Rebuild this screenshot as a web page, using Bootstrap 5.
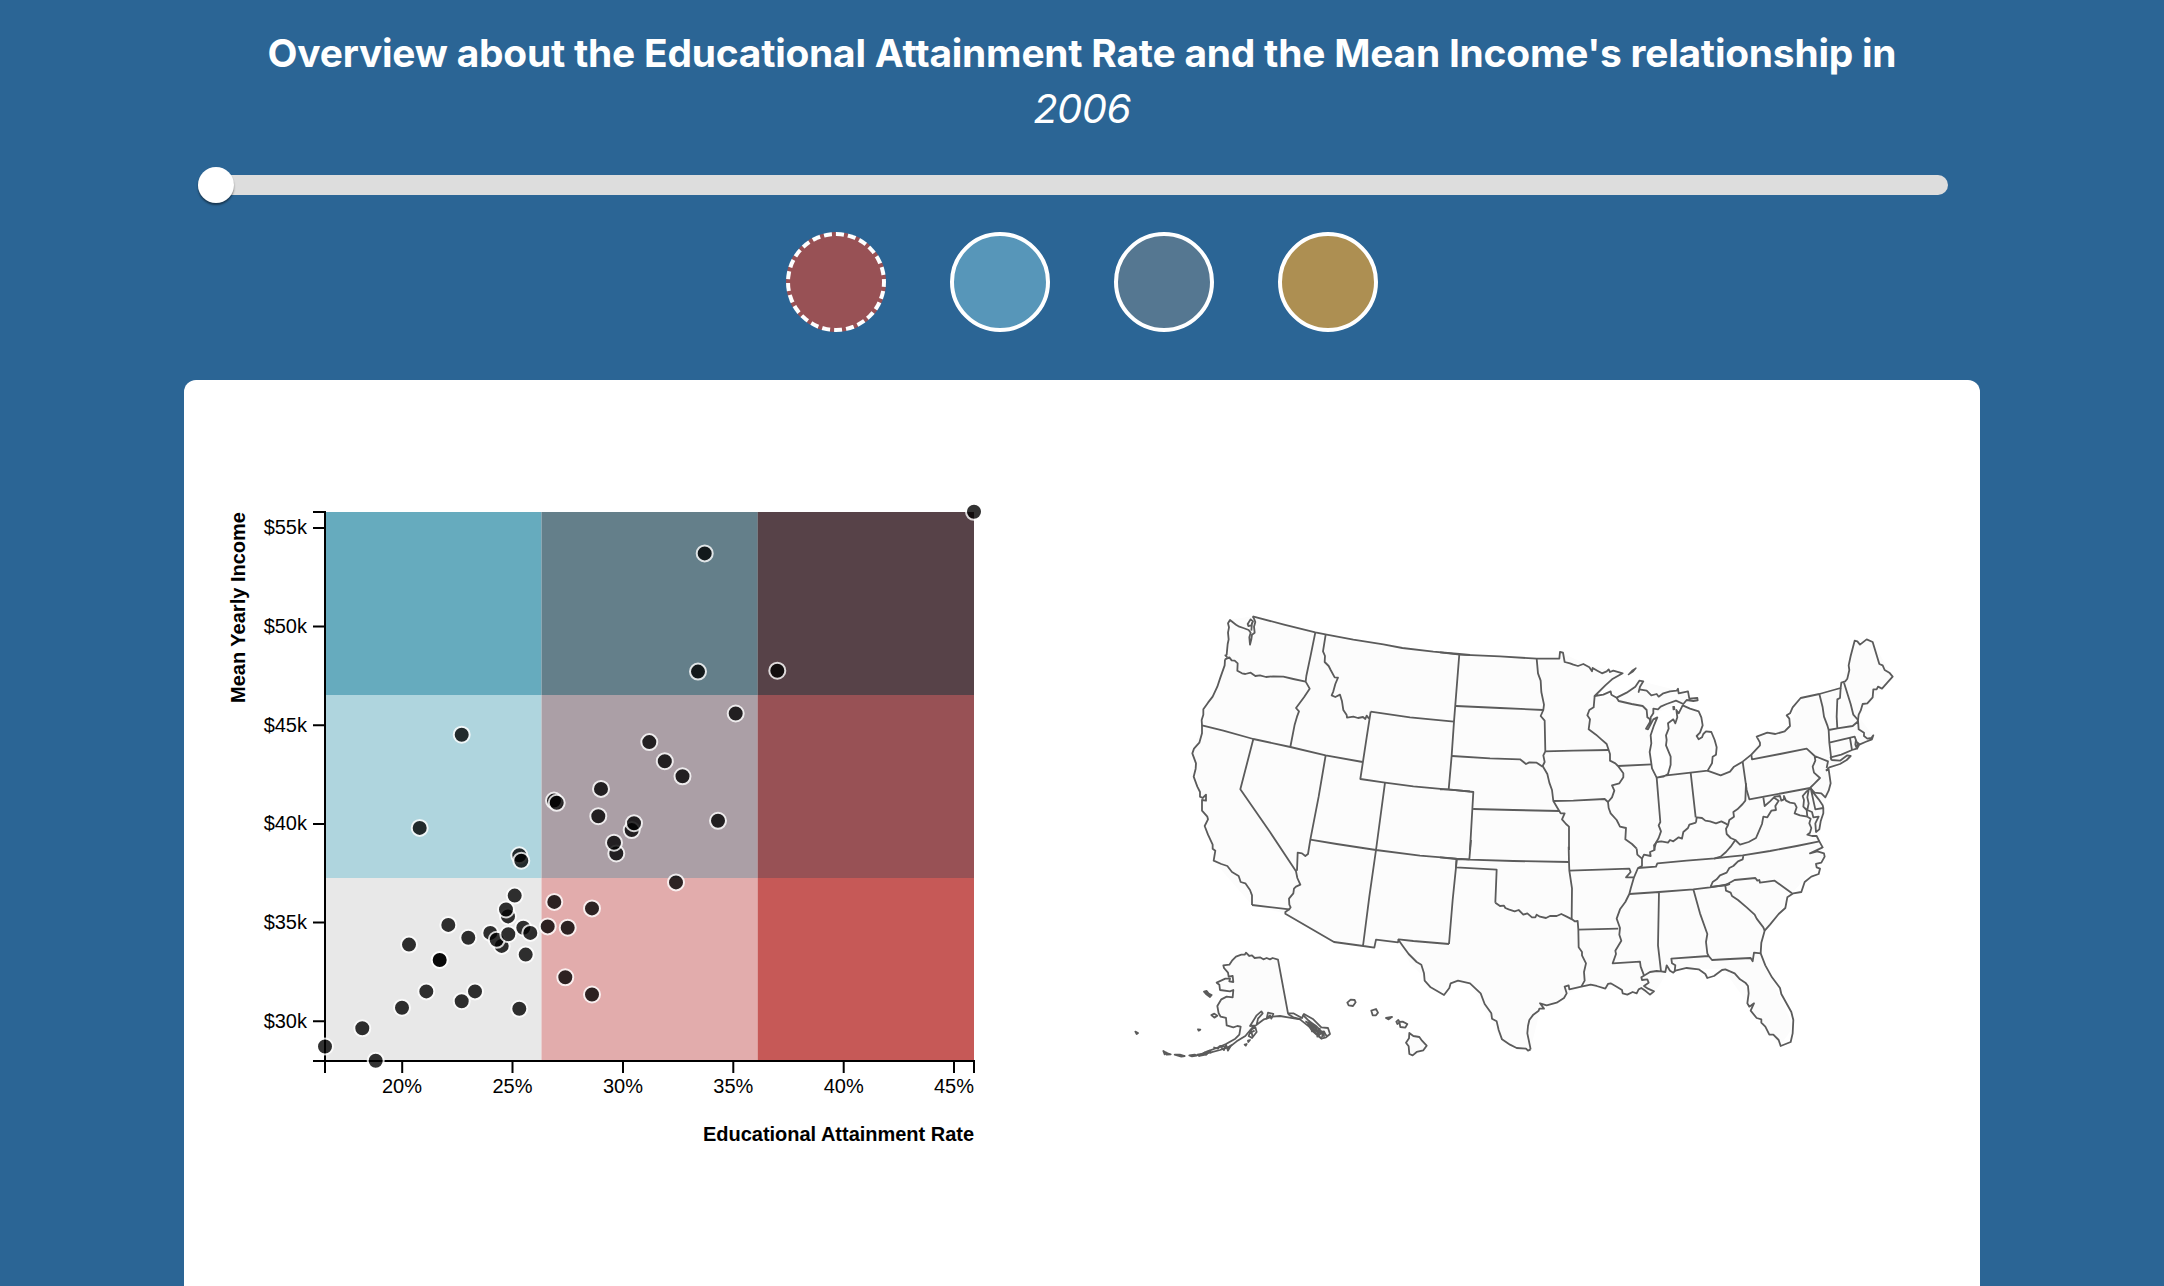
<!DOCTYPE html>
<html lang="en">
<head>
<meta charset="utf-8">
<meta name="viewport" content="width=device-width, initial-scale=1">
<title>Educational Attainment and Mean Income</title>
<link href="https://cdn.jsdelivr.net/npm/bootstrap@5.3.0/dist/css/bootstrap.min.css" rel="stylesheet">
<script src="https://cdn.jsdelivr.net/npm/bootstrap@5.3.0/dist/js/bootstrap.bundle.min.js"></script>
<style>
body{background:#2b6595;font-family:Inter,"Liberation Sans",sans-serif;height:1286px}
.page-wrap{width:1796px}
.headline{font-size:38.9px;line-height:56px;padding-top:25px;height:139px}
.headline strong{font-weight:700;letter-spacing:-.215px;white-space:nowrap}
.headline em{font-weight:400;letter-spacing:-.5px;font-size:40px}
.year-slider{-webkit-appearance:none;appearance:none;display:block;width:1750px;height:20px;margin:36px 0 0 14px;border-radius:10px;background:#ddd;outline:0}
.year-slider::-webkit-slider-thumb{-webkit-appearance:none;width:36px;height:36px;border-radius:50%;background:#fff;box-shadow:0 2px 2px rgba(0,0,0,.45);border:0}
.palettes{gap:64px;margin-top:37px}
.swatch{width:100px;height:100px;border:4px solid #fff;padding:0}
.swatch.active{border-style:dashed}
.sw-red{background:#985155}.sw-blue{background:#5796b9}.sw-slate{background:#557791}.sw-gold{background:#ad8f52}
.panel{margin-top:48px;height:906px;border-radius:12px 12px 0 0}
.panel svg{width:898px;height:906px}
.axis{fill:none;stroke:#000;stroke-width:2}
.chart-text{font:20px "Liberation Sans",sans-serif}
.chart-text .ttl{font-weight:700}
.dots circle{r:8px;fill:#000;stroke:#fff;stroke-width:2;opacity:.8}
.borders{fill:none;stroke:#5b5b5b;stroke-width:5.4;stroke-linejoin:round}
.land{fill:#fcfcfc}
</style>
</head>
<body class="overflow-hidden">
<main class="page-wrap mx-auto">
  <h1 class="headline text-white text-center mb-0"><strong>Overview about the Educational Attainment Rate and the Mean Income's relationship in</strong><br><em>2006</em></h1>
  <input class="year-slider" type="range" min="2006" max="2017" value="2006" aria-label="Year">
  <div class="palettes d-flex justify-content-center">
    <button class="swatch sw-red active rounded-circle" aria-label="Red palette"></button>
    <button class="swatch sw-blue rounded-circle" aria-label="Blue palette"></button>
    <button class="swatch sw-slate rounded-circle" aria-label="Slate palette"></button>
    <button class="swatch sw-gold rounded-circle" aria-label="Gold palette"></button>
  </div>
  <section class="panel bg-white d-flex">
    <svg viewBox="184 380 898 906">
      <g>
        <path fill="#66abbe" d="M325 512h216.5v183H325z"/><path fill="#647f8a" d="M541.5 512h216.3v183H541.5z"/><path fill="#574248" d="M757.7 512H974v183H757.7z"/>
        <path fill="#afd5de" d="M325 695h216.5v183H325z"/><path fill="#ab9fa6" d="M541.5 695h216.3v183H541.5z"/><path fill="#985155" d="M757.7 695H974v183H757.7z"/>
        <path fill="#e8e8e8" d="M325 878h216.5v183H325z"/><path fill="#e2acac" d="M541.5 878h216.3v183H541.5z"/><path fill="#c65957" d="M757.7 878H974v183H757.7z"/>
      </g>
      <path class="axis" d="M313 512H325V1061H313M313 528H325M313 626.5H325M313 725.3H325M313 824H325M313 922.5H325M313 1021.3H325"/>
      <path class="axis" d="M325 1073V1061H974V1073M402.2 1061V1073M512.5 1061V1073M623 1061V1073M733.3 1061V1073M843.7 1061V1073M954 1061V1073"/>
      <g class="chart-text" text-anchor="end">
        <text x="307" y="534">$55k</text><text x="307" y="633">$50k</text><text x="307" y="732">$45k</text><text x="307" y="830">$40k</text><text x="307" y="929">$35k</text><text x="307" y="1028">$30k</text>
        <text class="ttl" x="974" y="1141" textLength="271">Educational Attainment Rate</text>
        <text class="ttl" transform="translate(244.5 512) rotate(-90)" textLength="191">Mean Yearly Income</text>
      </g>
      <g class="chart-text" text-anchor="middle">
        <text x="402" y="1093">20%</text><text x="512.5" y="1093">25%</text><text x="623" y="1093">30%</text><text x="733.3" y="1093">35%</text><text x="843.7" y="1093">40%</text><text x="954" y="1093">45%</text>
      </g>
      <g class="dots" id="dots"></g>
    </svg>
    <svg viewBox="1082 380 898 906">
      <g transform="translate(1120 600) scale(.33333)">
        <path class="land" d="M398 49L586 97 790 133 1020 164 1318 176 1330 160 1400 194 1508 220 1424 288 1490 294 1560 242 1680 274 1732 300 1690 310 1600 340 1590 420 1596 500 1610 533 1650 522 1640 400 1690 316 1740 340 1740 410 1785 410 1763 512 1830 515 1896 464 1920 410 2010 380 2042 294 2162 264 2204 122 2258 126 2318 230 2216 350 2260 408 2120 510 2132 560 2110 620 2098 724 2112 770 2016 880 1934 992 1922 1060 2020 1280 1980 1338 1890 1220 1810 1108 1650 1104 1600 1184 1510 1170 1384 1160 1260 1230 1232 1348 1150 1330 1050 1150 1000 1150 960 1180 870 1090 834 1022 763 1043 642 1026 496 941 396 915 280 782 217 460 246 376 320 170 325 60Z"/>
        <!-- Pacific, Mountain and Southwest states -->
        <g class="borders" transform="translate(180 0)">
          <path d="M218 49L312 74 406 97 440 104 520 119 610 133 667 144 760 155 838 162 870 165"/>
          <path d="M218 49L222 56 226 66 222 80 224 98 216 104 214 118 210 134 208 112 212 98 206 90 190 84 178 80 168 74 150 60 144 70 147 82 144 98 146 118 143 132 140 164 136 166 142 172M203 72l9-14 7 6-5 12-9 2zM216 68l-2 24"/>
          <path d="M135 178L148 172 155 181 164 182 173 190 172 212 186 220 196 222 212 218 226 228 240 226 258 231 280 229 310 230 340 237 377 245"/>
          <path d="M406 97L392 166 379 228 377 245 389 266 372 292 348 324 357 334 351 350 344 374 331 441"/>
          <path d="M135 178L134 196 120 236 112 260 98 290 84 308 70 328 70 344 65 360 66 376 130 392 220 417 331 441 437 466 548 486"/>
          <path d="M437 104L429 154 435 168 434 186 446 198 452 210 464 232 474 233 466 252 460 274 455 286 466 291 480 284 486 304 490 330 500 345 501 353 520 350 534 354 549 351 556 357 560 347 567 356"/>
          <path d="M572 335L560 412 541 537 615 548 700 559 806 569 870 574M572 335L690 352 822 365M838 162L822 365 815 467 806 569"/>
          <path d="M437 466L416 590 391 719 384 762 376 768 366 760 353 758 351 812M220 417L181 568 270 696 348 814 352 834 361 854 348 860 342 866 340 880 327 896 328 914 332 922 328 928 216 915"/>
          <path d="M328 928L316 936 316 941 462 1026 550 1038 583 1043 588 1019 654 1027 656 1018 700 1023 807 1032M391 719L470 732 588 750 720 767 830 776 868 778M615 548L588 750 568 890 549 1038M830 776L828 802 818 900 807 1032"/>
          <path d="M66 376L66 400 58 428 42 446 37 460 48 490 47 506 41 530 52 560 60 576 60 590 68 594 78 584 78 602 66 600 66 632 82 650 84 658 74 678 84 704 98 734 98 746 106 752 101 782 124 792 142 798 156 816 176 828 182 846 196 850 210 870 216 886 216 915"/>
        </g>
        <!-- Upper Midwest and Great Lakes -->
        <g class="borders" transform="translate(960 90)">
          <path d="M0 67L60 74 180 79 290 86 358 86 360 66 369 68 374 96 390 100 400 104 414 108 430 102 448 112 456 124 458 114 472 122 486 130 500 124 506 118 510 126 520 122 548 130 516 148 496 166 464 198 490 194 512 184 514 194 530 203 560 188 586 170 598 152 610 154 600 170 596 186 598 178 620 182 634 196 650 192 656 200 670 190 690 184 710 182 714 176 716 190 744 184 748 206 772 204 773 211 760 213 740 210 730 222 708 212 680 222 662 230 654 238 640 236 640 250 632 262 632 278"/>
          <path stroke-width="4" fill="#5b5b5b" d="M565 134L576 122 588 114 580 124ZM699 230l4 0 1 8-4 1z"/>
          <path d="M530 203L536 213 575 222 608 228 620 240 622 262 630 268 630 276 618 296 624 298 640 268 652 262 642 286 632 316 634 340 629 366 634 400 636 415 650 443 670 440 684 432 692 404 692 380 678 346 680 330 678 316 686 296 684 280 700 268 706 280 712 262 709 240 716 250 728 226 750 236 776 244 784 262 788 286 780 308 770 318 776 328 786 322 790 312 798 304 814 306 824 330 830 352 828 374 818 380 816 400 803 422 752 428 680 436 650 443"/>
          <path d="M752 428L767 562M534 408L636 403M650 443L661 576 656 586 663 604 656 624 648 638 642 660"/>
          <path d="M464 198L461 232 448 240 442 256 450 268 446 298 468 314 484 328 500 342 506 360 510 372 510 392 526 400 534 408 550 430 550 442 538 460 516 466 523 482 516 502 504 516 506 534 512 550 530 570 540 590 558 594 556 628 576 642 590 656"/>
          <path d="M314 364L400 362 506 360M340 513L400 512 494 507 504 516M290 86L294 130 302 152 304 186 312 224 310 240 302 258 314 272 316 364 310 376 314 396 308 408 322 432 328 458 336 480 340 513 356 540 362 550 374 550 366 568 378 582 387 590 387 660"/>
          <path d="M48 228L180 234 310 240M36 378L150 385 240 388 258 402 268 397 290 398 308 410M100 537L220 540 358 543M0 478L26 478 100 486 90 660"/>
        </g>
        <!-- South Central -->
        <g class="borders" transform="translate(960 660)">
          <path d="M0 112L48 117 88 119 220 123 387 126M386 80L387 126 388 152 396 205 395 298M93 60L88 118M50 117L48 142 170 149 166 248"/>
          <path d="M166 248L180 258 192 257 196 264 206 268 224 274 236 270 250 284 262 280 276 292 286 292 290 284 300 290 318 294 330 288 350 288 364 282 380 290 396 298 404 304 413 303 415 328 416 382 426 396 426 406 438 430 432 456 434 482 424 500M415 329L535 326"/>
          <path d="M388 152L480 149 568 146 572 156 558 172 582 172M590 86L592 104 606 116 606 138 594 144 582 172 572 206 568 222 556 246 540 268 530 296 540 324 538 344 544 362 526 392 528 402 518 430 600 425 602 440 612 466"/>
          <path d="M606 116L612 104 632 108 630 96 644 90 642 76 650 66 664 64 684 68 690 60 700 64 716 52 726 56 730 36 744 24 748 14 768 8"/>
          <path d="M594 144L648 140 652 130 740 122 825 115 870 110M568 222L657 216 760 208 810 202 870 192M657 216L654 376 663 454M760 208L780 280 802 342 798 366 802 400 806 408 694 416 696 430 706 436 704 454M806 408L816 420 870 417"/>
          <path d="M272 688L262 640 264 618 268 600 280 584 296 572 298 566 312 566 300 550 320 556 350 548 372 534 380 520 374 500 386 496 388 508 424 500 452 494 470 498 496 506 504 492 512 490 530 500 546 510 548 520 562 524 578 516 590 520 596 508 604 504 618 514 630 524 642 514 624 506 612 498 626 488 622 478 606 480 604 472 614 466 630 456 650 453 663 454 676 456 680 436 690 452 700 458 706 452 740 444 776 448 796 462 802 474 822 468 846 450 856 448 870 454"/>
          <path d="M-126 358L-110 380-94 402-70 426-56 434-48 460-46 482-28 502 12 525 28 504 32 490 54 482 90 490 122 520 134 552 154 580 156 596 170 604 176 630 186 658 210 674 230 684 258 686 264 692 272 688"/>
        </g>
        <!-- Southeast and mid-Atlantic -->
        <g class="borders" transform="translate(1440 480)">
          <path d="M438 70L436 122 428 132 412 148 400 156 402 170 388 180 384 196 376 190 364 184 348 190 330 184 316 182 306 174 290 172 288 188M384 196L378 206 380 222 392 234 406 240 392 260 378 276 362 290 342 296"/>
          <path d="M406 240L420 254 446 246 468 234 474 220 486 192 490 170 502 172 514 152 528 150 526 138 536 122 520 112M490 112L494 138 510 124 524 110 540 108 544 122 552 118 552 108 558 122 570 128 584 130 590 142 584 160 600 166 622 170"/>
          <path d="M622 170L620 150 610 140 612 120 608 108 620 94 632 84M622 170L632 176 628 190 634 204 630 218 622 224 636 228 650 228 658 244M626 90L622 112 626 130 622 150 636 156 640 172 656 170 646 190 648 216 658 208 662 184 670 160 670 144M632 84L642 130 646 148 670 144 668 136 656 118 640 98 632 84"/>
          <path d="M390 290L428 286 510 273 590 258 658 244 668 262 630 280 652 274 672 280 674 290 664 308 648 312 650 322 660 326 656 342 634 350 614 366 604 396 580 400 562 412 556 444 536 462 510 494 494 512 484 548 482 580"/>
          <path d="M390 372L376 376 330 381M376 376L404 360 466 354 472 362 478 360 480 368 524 362 576 400M430 288L428 298 414 304 400 318 388 324 380 338 360 346 350 358 338 366 332 380M376 376L378 392 392 398 396 408 414 420 440 442 464 464 470 476 490 502 494 512"/>
          <path d="M390 597L452 594 458 604 462 578 482 580 496 616 516 652 540 684 544 702 574 756 580 780 578 820 572 846 542 858 536 840 520 824 508 824 496 800 484 788 484 778 470 774 452 752 462 730 448 740 442 730 446 700 444 678 436 668 420 658 404 640 390 634"/>
        </g>
        <!-- Northeast -->
        <g class="borders" transform="translate(1680 60)">
          <path d="M82 452L122 466 150 455 162 440 188 425 214 404 240 376 240 368 230 350 262 338 286 342 314 334 330 318 328 296 320 286 330 280 338 262 362 234 418 222 482 204 484 188 496 184 502 176 508 150 506 136 512 108 524 62 532 64 540 74 560 58 578 66 598 132 608 136 614 150 628 158 638 170 622 188 606 206 594 200 590 208 580 208 578 232 562 250 548 252 542 272 536 284 534 300"/>
          <path d="M492 188L512 252 520 284 534 300 532 306 518 318 472 325 446 330M482 204L480 234 472 238 470 290 472 325M418 222L428 262 432 290 442 316 446 330 448 368 454 418M448 368L524 350 530 366 540 374M534 300L536 328 552 338 552 348 562 356 574 354 580 346 576 358 556 366 538 374 530 388M510 354L516 390M528 358l-2 16 4 10 4-16M454 420L452 412 484 404 516 390 530 386M454 420L480 422 502 406 512 408 500 420 480 432 448 442 438 452"/>
          <path d="M214 404L216 418 300 402 380 386 404 408 444 424 440 444M404 408L406 422 398 440 402 458 420 474 404 490 390 504 252 530 208 538 200 510 188 425M438 452L446 448 452 490 446 512 436 532 424 520 404 518 390 504"/>
        </g>
        <!-- Alaska and Hawaii -->
        <g class="borders" transform="translate(0 1020)">
          <path fill="#fcfcfc" d="M474 59L458 54 450 58 440 54 430 58 420 52 404 54 396 46 388 48 378 38 374 44 364 44 348 50 336 62 328 74 310 76 312 84 324 98 326 110 338 108 340 126 328 124 330 116 316 116 290 128 298 134 300 150 330 154 340 150 338 172 320 170 304 178 292 198 296 220 302 230 318 234 320 256 340 262 352 258 362 260 358 284 346 296 318 312 290 324 262 334 236 346 270 338 300 330 330 320 350 304 376 288 396 264 408 256 390 258 410 226 424 214 428 220 414 236 410 254 432 238 458 230 480 228 504 232 540 238 570 262 604 296 618 292 630 282 624 264 604 262 580 238 552 222 546 234 520 220 504 220Z"/>
          <path d="M504 222l16 10 24 6M548 224l20 20 20 14 14 14 20 16M556 244l16 8 8 16 14 10 4 14M568 242l4 20 14-2 8 18 16-2-4 16M584 252l-8 22 20-4-4 20 14-12M600 264l-6 14 18-4 6 12M562 250l14 22 16 14 14 10M574 248l12 18 16 12 12 12M440 236l4-18 16 4-6 14-4-10zM386 288l6-18 14-8 4 14-14 18zM392 268l6 22M386 280l18-8M280 322l14 4 6-8 12 12 6-16 6 18 8-14M252 336l6 8 10-12 6 8M296 320l12-2 14 6 14-10"/>
          <path fill="#5b5b5b" d="M252 155l8-2 6 8 9 4-5 6-12-9zM46 275l8 4-4 3zM234 268l7 1-5 3zM130 333l4 10 6-5 0 6 12-1-12-4zM164 344l16 0 14 4-10 2zM208 346l16-2 6 3-14 2zM232 344l20-3 12-6-4 8-22 5zM374 314l6-2-3 5zM384 302l6-2-5 6zM798 234l18-3-10 7z"/>
          <path fill="#fcfcfc" d="M274 225l9-4 9 6-9 6zM682 188l10-9 12 1 3 7-8 11-13-2zM754 212l14-5 6 11-6 8-10 0zM829 245l6-5 4 7-7 5zM838 246l10-1 14 7-6 11-15-2zM868 279l12 9 18 3 8 11 14 15-10 14-20 5-12 10-10-4-2-23-8-11 9-13z"/>
        </g>
      </g>
    </svg>
  </section>
</main>
<script>
const states=[[461.7,735],[419.7,828.2],[554,800.9],[556.7,803.1],[601,789.2],[598.3,816.5],[519.3,855.6],[521.3,861],[514.7,895.9],[508,916.7],[506,909.8],[448.3,925.2],[468.3,938],[409,944.9],[490.3,933.2],[501.7,946.2],[496.7,940.1],[508.3,934.5],[523.3,928],[530.3,933.2],[439.7,960.3],[439.7,960.3],[525.7,954.9],[426.3,991.7],[475,991.7],[461.7,1001.5],[402,1008],[519.3,1009.1],[362.3,1028.6],[325,1046.8],[375.7,1061],[554.3,902.2],[547.7,926.7],[567.7,928],[565.3,977.6],[592,908.7],[592,994.8],[704.7,553.7],[698,671.9],[777.3,671],[974,512.1],[735.7,713.8],[649.3,742.4],[664.8,761.5],[682.5,776.6],[718,821.1],[631.7,830.4],[634,823.5],[616.3,853.8],[614,843],[676,882.7]];
const dots=document.getElementById('dots');
for(const [x,y] of states){
  const c=document.createElementNS('http://www.w3.org/2000/svg','circle');
  c.setAttribute('cx',x);c.setAttribute('cy',y-.3);c.setAttribute('r',8);dots.appendChild(c);
}
</script>
</body>
</html>
